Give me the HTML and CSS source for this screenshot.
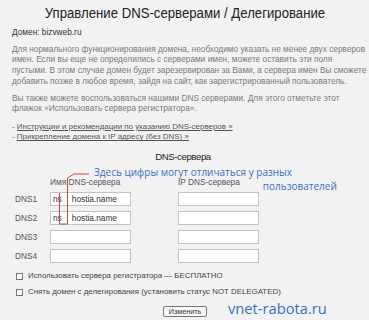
FILE: index.html
```html
<!DOCTYPE html>
<html lang="ru">
<head>
<meta charset="utf-8">
<link rel="stylesheet" href="styles.css">
</head>
<body>
<div class="page">
  <h1 class="title"><span class="title-in">Управление DNS-серверами / Делегирование</span></h1>
  <div class="domain">Домен: bizvweb.ru</div>
  <p class="text">Для нормального функционирования домена, необходимо указать не менее двух серверов<br>имен. Если вы еще не определились с серверами имен, можете оставить эти поля<br>пустыми. В этом случае домен будет зарезервирован за Вами, а сервера имен Вы сможете<br>добавить позже в любое время, зайдя на сайт, как зарегистрированный пользователь.</p>
  <p class="text second">Вы также можете воспользоваться нашими DNS серверами. Для этого отметьте этот<br>флажок «Использовать сервера регистратора».</p>
  <ul class="links">
    <li>- <a href="#">Инструкции и рекомендации по указанию DNS-серверов »</a></li>
    <li>- <a href="#">Прикрепление домена к IP адресу (без DNS) »</a></li>
  </ul>
  <div class="form">
    <div class="caption">DNS-сервера</div>
    <div class="grid">
      <div></div><div class="head">Имя DNS-сервера</div><div class="head">IP DNS-сервера</div>
      <div class="lbl">DNS1</div><div class="inp">ns<span class="gap"></span>hostia.name</div><div class="inp"></div>
      <div class="lbl">DNS2</div><div class="inp">ns<span class="gap"></span>hostia.name</div><div class="inp"></div>
      <div class="lbl">DNS3</div><div class="inp"></div><div class="inp"></div>
      <div class="lbl">DNS4</div><div class="inp"></div><div class="inp"></div>
    </div>
    <label class="check first"><span class="box"></span>Использовать сервера регистратора — БЕСПЛАТНО</label>
    <label class="check"><span class="box"></span>Снять домен с делегирования (установить статус NOT DELEGATED)</label>
    <div class="btnrow"><span class="btn">Изменить</span></div>
  </div>
  <svg class="marks" width="40" height="60" viewBox="0 0 40 60">
    <path d="M1.5 23 V54 H9.5 V8 L16 4 H31" fill="none" stroke="#c9473d" stroke-width="1"/>
  </svg>
  <div class="note">Здесь цифры могут отличаться у разных<br><span class="note2">пользователей</span></div>
  <div class="wm">vnet-rabota.ru</div>
</div>
</body>
</html>
```
FILE: styles.css
```css
html, body {
  margin: 0;
  padding: 0;
  background: #f2f2f2;
}
.page {
  position: relative;
  width: 369px;
  height: 320px;
  overflow: hidden;
  font-family: "Liberation Sans", Arial, sans-serif;
  color: #7a7a7a;
}
.title {
  margin: 0;
  padding-top: 4px;
  font-weight: normal;
  font-size: 15.5px;
  line-height: 18px;
  color: #222;
  text-align: center;
  white-space: nowrap;
}
.title-in {
  display: inline-block;
  transform: scaleX(0.85);
  transform-origin: center;
}
.domain {
  margin: 5px 0 0 12px;
  font-size: 8.3px;
  line-height: 10px;
  color: #333;
}
.text {
  margin: 6.6px 0 0 12px;
  font-size: 8.3px;
  line-height: 10.7px;
  white-space: nowrap;
}
.text.second {
  margin-top: 6.2px;
}
.links {
  list-style: none;
  margin: 7.75px 0 0 12px;
  padding: 0;
  font-size: 7.95px;
  line-height: 10.5px;
  color: #555;
}
.links a {
  color: #555;
}
.form {
  margin-top: 8.25px;
}
.caption {
  text-align: center;
  padding-right: 3px;
  font-size: 9.6px;
  letter-spacing: -0.4px;
  line-height: 12px;
  color: #222;
}
.grid {
  margin: 14px 0 0 15px;
  display: grid;
  grid-template-columns: 35px 128px 81px;
  row-gap: 5px;
  align-items: center;
  font-size: 8.3px;
  color: #444;
}
.grid .head {
  line-height: 10px;
  color: #555;
}
.lbl {
  color: #555;
}
.inp {
  box-sizing: border-box;
  width: 81px;
  height: 14px;
  background: #fff;
  border: 1px solid #c4c4c4;
  line-height: 12px;
  padding-left: 2px;
  color: #333;
  white-space: nowrap;
}
.gap {
  display: inline-block;
  width: 10px;
}
.check {
  display: flex;
  align-items: center;
  margin: 0 0 0 16px;
  font-size: 7.9px;
  line-height: 10px;
  color: #444;
}
.check.first {
  margin-top: 8px;
}
.check + .check {
  margin-top: 6px;
}
.box {
  box-sizing: border-box;
  width: 7px;
  height: 7px;
  border: 1px solid #777;
  background: #fff;
  margin-right: 5px;
}
.btnrow {
  display: flex;
  margin-top: 9px;
  padding-left: 163px;
}
.btn {
  display: block;
  box-sizing: border-box;
  width: 44px;
  height: 11px;
  border: 1px solid #777;
  border-radius: 2px;
  background: #f8f8f8;
  font-size: 7.2px;
  line-height: 9px;
  text-align: center;
  color: #333;
}
.marks {
  position: absolute;
  left: 58px;
  top: 170px;
}
.note {
  position: absolute;
  left: 94px;
  top: 165px;
  font-family: "Open Sans", sans-serif;
  font-size: 11.5px;
  line-height: 13.5px;
  color: #3e6ec2;
  white-space: nowrap;
  transform: scaleX(0.87);
  transform-origin: left top;
}
.note2 {
  padding-left: 194px;
}
.wm {
  position: absolute;
  left: 228px;
  top: 298px;
  font-family: "Open Sans", sans-serif;
  font-size: 14.7px;
  line-height: 20px;
  color: #3e6ec2;
}
```
